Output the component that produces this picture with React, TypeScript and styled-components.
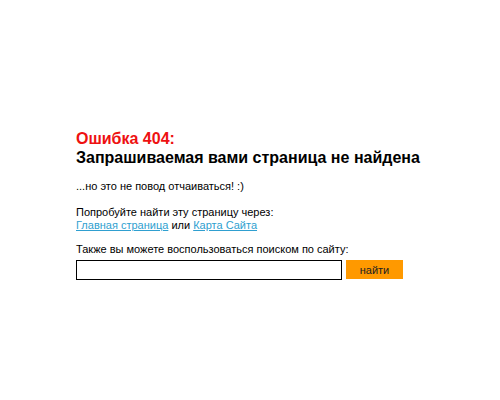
import React from "react";
import styled, { createGlobalStyle } from "styled-components";

const Global = createGlobalStyle`
  html, body { margin: 0; padding: 0; background: #fff; }
  body { font-family: "Liberation Sans", Arial, sans-serif; color: #000; }
`;

const Page = styled.div`
  width: 500px;
  height: 400px;
  box-sizing: border-box;
  padding: 129px 0 0 76px;
`;

const Title = styled.h1`
  margin: 0;
  font-size: 16px;
  line-height: 19px;
  font-weight: bold;
`;

const Red = styled.span`
  color: #ee1111;
  display: block;
`;

const Text = styled.p<{ $top: number }>`
  margin: ${(p) => p.$top}px 0 0;
  font-size: 11px;
  line-height: 13px;
`;

const Link = styled.a`
  color: #2f9fd0;
  text-decoration: underline;
`;

const Form = styled.form`
  display: flex;
  align-items: flex-start;
  gap: 4px;
  margin-top: 4px;
`;

const Input = styled.input`
  box-sizing: border-box;
  width: 266px;
  height: 20px;
  border: 1px solid #000;
  margin: 0;
  padding: 0 4px;
  outline: none;
`;

const Button = styled.button`
  box-sizing: border-box;
  width: 57px;
  height: 19px;
  border: none;
  background: #ff9900;
  color: #222;
  font-family: "Liberation Sans", Arial, sans-serif;
  font-size: 11px;
  padding: 0;
  margin: 0;
`;

export default function App() {
  return (
    <>
      <Global />
      <Page>
        <Title>
          <Red>Ошибка 404:</Red>
          Запрашиваемая вами страница не найдена
        </Title>
        <Text $top={13}>...но это не повод отчаиваться! :)</Text>
        <Text $top={13}>
          Попробуйте найти эту страницу через:
          <br />
          <Link href="#">Главная страница</Link> или <Link href="#">Карта Сайта</Link>
        </Text>
        <Text $top={11}>Также вы можете воспользоваться поиском по сайту:</Text>
        <Form onSubmit={(e) => e.preventDefault()}>
          <Input type="text" />
          <Button type="submit">найти</Button>
        </Form>
      </Page>
    </>
  );
}
